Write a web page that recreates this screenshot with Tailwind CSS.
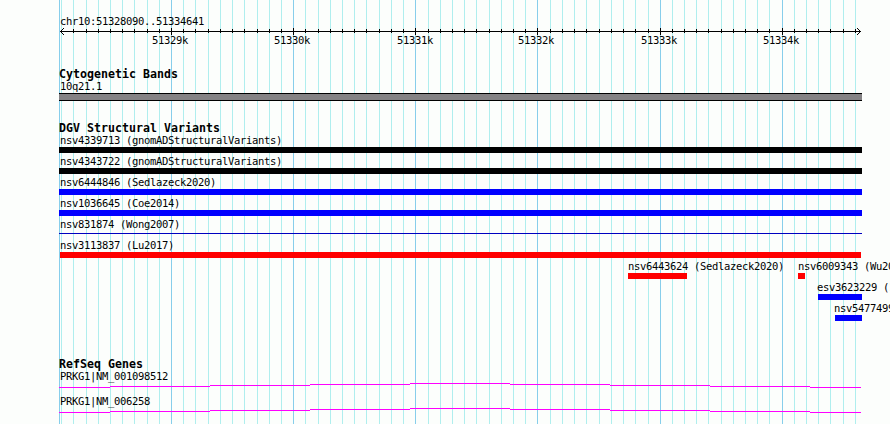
<!DOCTYPE html>
<html lang="en">
<head>
<meta charset="utf-8">
<title>chr10:51328090..51334641</title>
<script src="https://cdn.jsdelivr.net/npm/@tailwindcss/browser@4"></script>
</head>
<body class="bg-[#fcfefc] text-black">
<main class="relative isolate w-[890px] h-[424px] overflow-hidden pl-[59px] font-['DejaVu_Sans_Mono','Liberation_Mono',monospace] text-[10.5px] leading-[12px] tracking-[-0.32px] whitespace-nowrap">
  <svg class="absolute inset-0 -z-10" width="890" height="424" shape-rendering="crispEdges" fill="none">
    <path id="minor" stroke="#afeeee"/>
    <path id="major" stroke="#87ceeb"/>
  </svg>

  <header class="h-[67px] pt-[15px]">
    <div class="h-[12px] pl-[1px]">chr10:51328090..51334641</div>
    <svg class="block" width="803" height="8" shape-rendering="crispEdges" fill="none" stroke="#000">
      <path d="M1 4.5H802"/>
      <path id="ticks"/>
      <path d="M4.5 1v1M3.5 2v1M2.5 3v1M1.5 4v1M2.5 5v1M3.5 6v1M4.5 7v1M798.5 1v1M799.5 2v1M800.5 3v1M801.5 4v1M800.5 5v1M799.5 6v1M798.5 7v1"/>
    </svg>
    <div class="flex h-[12px] -mt-[1px] pl-[93px]">
      <span class="w-[122px]">51329k</span><span class="w-[123px]">51330k</span><span class="w-[121px]">51331k</span><span class="w-[123px]">51332k</span><span class="w-[122px]">51333k</span><span>51334k</span>
    </div>
  </header>

  <section class="h-[54px]">
    <h2 class="h-[13px] leading-[14px] text-[11.6px] tracking-[0.016px] font-bold">Cytogenetic Bands</h2>
    <div class="h-[13px] pl-[1px]">10q21.1</div>
    <div class="w-[803px] h-[8px] bg-[#848284] border-y border-black"></div>
  </section>

  <section class="h-[236px]">
    <h2 class="h-[13px] leading-[14px] text-[11.6px] tracking-[0.016px] font-bold">DGV Structural Variants</h2>
    <div class="h-[21px]"><div class="h-[13px] pl-[1px]">nsv4339713 (gnomADStructuralVariants)</div><div class="w-[803px] h-[6px] bg-black"></div></div>
    <div class="h-[21px]"><div class="h-[13px] pl-[1px]">nsv4343722 (gnomADStructuralVariants)</div><div class="w-[803px] h-[6px] bg-black"></div></div>
    <div class="h-[21px]"><div class="h-[13px] pl-[1px]">nsv6444846 (Sedlazeck2020)</div><div class="w-[803px] h-[6px] bg-[#0000ff]"></div></div>
    <div class="h-[21px]"><div class="h-[13px] pl-[1px]">nsv1036645 (Coe2014)</div><div class="w-[803px] h-[6px] bg-[#0000ff]"></div></div>
    <div class="h-[21px]"><div class="h-[15px] pl-[1px]">nsv831874 (Wong2007)</div><div class="w-[803px] h-px bg-[#0000c0]"></div></div>
    <div class="h-[21px] pl-[1px]"><div class="h-[13px]">nsv3113837 (Lu2017)</div><div class="w-[801px] h-[6px] bg-[#ff0000]"></div></div>
    <div class="flex h-[21px] pl-[569px]">
      <div class="w-[170px] shrink-0"><div class="h-[13px]">nsv6443624 (Sedlazeck2020)</div><div class="w-[59px] h-[6px] bg-[#ff0000]"></div></div>
      <div class="shrink-0"><div class="h-[13px]">nsv6009343 (Wu2014)</div><div class="w-[7px] h-[6px] bg-[#ff0000]"></div></div>
    </div>
    <div class="h-[21px] pl-[759px]"><div class="h-[13px] -ml-[1px]">esv3623229 (1000G)</div><div class="w-[44px] h-[6px] bg-[#0000ff]"></div></div>
    <div class="h-[21px] pl-[776px]"><div class="h-[13px] -ml-[1px]">nsv5477499</div><div class="w-[27px] h-[6px] bg-[#0000ff]"></div></div>
  </section>

  <section>
    <h2 class="h-[13px] leading-[14px] text-[11.6px] tracking-[0.016px] font-bold">RefSeq Genes</h2>
    <div class="h-[25px]"><div class="h-[13px] pl-[1px]">PRKG1|NM_001098512</div>
      <svg class="block" width="803" height="6" shape-rendering="crispEdges" fill="none" stroke="#ff00ff"><path d="M0 4.5H51M51 3.5H151M151 2.5H251M251 1.5H351M351 .5H451M451 1.5H551M551 2.5H651M651 3.5H751M751 4.5H802"/></svg></div>
    <div class="h-[25px]"><div class="h-[13px] pl-[1px]">PRKG1|NM_006258</div>
      <svg class="block" width="803" height="6" shape-rendering="crispEdges" fill="none" stroke="#ff00ff"><path d="M0 4.5H51M51 3.5H151M151 2.5H251M251 1.5H351M351 .5H451M451 1.5H551M551 2.5H651M651 3.5H751M751 4.5H802"/></svg></div>
  </section>
</main>
<script>
  const minor = [61,73,86,98,110,122,134,147,159,183,195,208,220,232,244,257,269,281,305,318,330,342,354,366,379,391,403,428,440,452,464,476,489,501,513,525,550,562,574,586,599,611,623,635,648,672,684,696,708,721,733,745,757,769,794,806,818,830,843,855];
  const major = [171,293,415,537,660,782];
  const grid = xs => xs.map(x => `M${x + .5} 0V424`).join('');
  document.getElementById('minor').setAttribute('d', grid(minor));
  document.getElementById('major').setAttribute('d', grid([59, ...major]));
  document.getElementById('ticks').setAttribute('d',
    minor.slice(1).map(x => `M${x - 58.5} 2V6`).join('') + major.map(x => `M${x - 58.5} 1V8`).join(''));
</script>
</body>
</html>
